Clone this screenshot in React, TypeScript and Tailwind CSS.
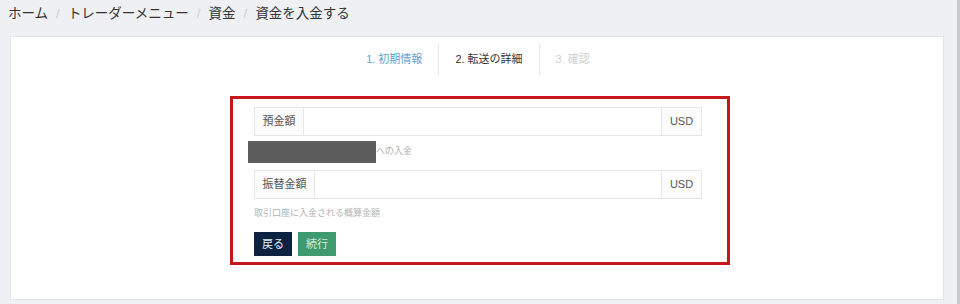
export default function App() {
  return (
    <div className="flex h-[304px] w-[960px] overflow-hidden bg-[#eef0f4] font-['Liberation_Sans','Noto_Sans_CJK_JP',sans-serif]">
      <div className="flex flex-1 flex-col pl-[10px] pr-[13px]">
        {/* Breadcrumb */}
        <div className="-ml-[2px] flex h-[36px] items-center pb-[7px] text-[13.5px] text-[#333]">
          <span>ホーム</span>
          <span className="px-[8px] text-[#ccc]">/</span>
          <span>トレーダーメニュー</span>
          <span className="px-[8px] text-[#ccc]">/</span>
          <span>資金</span>
          <span className="px-[8px] text-[#ccc]">/</span>
          <span>資金を入金する</span>
        </div>

        {/* Card */}
        <div className="flex h-[264px] flex-col border border-[#e3e5e9] bg-white pt-[7px]">
          {/* Steps */}
          <div className="flex justify-center pl-[2px] text-[11px]">
            <div className="flex h-[31px] items-center px-[16px] text-[#5ba3cc]">1. 初期情報</div>
            <div className="h-[31px] w-px bg-[#e8e8e8]" />
            <div className="flex h-[31px] items-center px-[16px] text-[#333]">2. 転送の詳細</div>
            <div className="h-[31px] w-px bg-[#e8e8e8]" />
            <div className="flex h-[31px] items-center px-[16px] text-[#cfcfcf]">3. 確認</div>
          </div>

          {/* Highlighted form */}
          <div className="ml-[219px] mt-[21px] flex w-[500px] flex-col border-[3px] border-[#c8161d] pb-[6px] pl-[21px] pr-[25px] pt-[8px]">
            <div className="flex h-[29px] border border-[#e6e6e6] text-[11px] text-[#555]">
              <div className="flex w-[49px] items-center justify-center border-r border-[#e6e6e6] bg-[#fcfcfc]">預金額</div>
              <div className="flex-1" />
              <div className="flex w-[40px] items-center justify-center border-l border-[#e6e6e6] bg-[#fcfcfc]">USD</div>
            </div>
            <div className="-ml-[6px] mt-[5px] flex items-center">
              <div className="h-[22px] w-[128px] bg-[#5c5c5c]" />
              <span className="text-[9px] text-[#b0b0b0]">への入金</span>
            </div>
            <div className="mt-[7px] flex h-[29px] border border-[#e6e6e6] text-[11px] text-[#555]">
              <div className="flex w-[60px] items-center justify-center border-r border-[#e6e6e6] bg-[#fcfcfc]">振替金額</div>
              <div className="flex-1" />
              <div className="flex w-[40px] items-center justify-center border-l border-[#e6e6e6] bg-[#fcfcfc]">USD</div>
            </div>
            <div className="mt-[9px] text-[9px] leading-[10px] text-[#b4b4b4]">取引口座に入金される概算金額</div>
            <div className="mt-[14px] flex gap-[6px] text-[11px]">
              <button className="flex h-[24px] w-[38px] items-center justify-center bg-[#0b2240] text-[#e8eef5]">戻る</button>
              <button className="flex h-[24px] w-[38px] items-center justify-center bg-[#3f9b6f] text-[#cfe9db]">続行</button>
            </div>
          </div>
        </div>
      </div>
      <div className="w-[3px] bg-[#c9c9cd]" />
    </div>
  )
}
